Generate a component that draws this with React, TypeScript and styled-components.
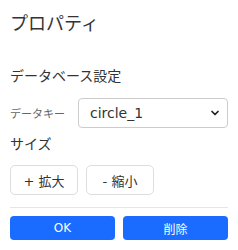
import styled, { createGlobalStyle } from "styled-components";
import { ChevronDown } from "lucide-react";

const GlobalStyle = createGlobalStyle`
  html, body {
    margin: 0;
    padding: 0;
    background: #fff;
  }
  body {
    font-family: "DejaVu Sans", "Noto Sans CJK JP", sans-serif;
    color: #333;
  }
`;

const Panel = styled.div`
  width: 238px;
  box-sizing: border-box;
  padding: 10px 10px 0 10px;
  display: flex;
  flex-direction: column;
`;

const Title = styled.h2`
  margin: 0;
  font-size: 18px;
  font-weight: normal;
  line-height: 27px;
  color: #333;
`;

const SectionTitle = styled.h3<{ $top: number }>`
  margin: ${({ $top }) => $top}px 0 0 0;
  font-size: 14px;
  font-weight: normal;
  line-height: 21px;
  color: #333;
`;

const Row = styled.div`
  display: flex;
  align-items: center;
  gap: 8px;
  margin-top: 11px;
`;

const Label = styled.label`
  font-size: 11px;
  color: #666;
  width: 60px;
  flex-shrink: 0;
`;

const SelectWrap = styled.div`
  position: relative;
  flex: 1;
  height: 30px;
`;

const Select = styled.select`
  appearance: none;
  width: 100%;
  height: 30px;
  box-sizing: border-box;
  border: 1px solid #ccc;
  border-radius: 4px;
  background: #fff;
  padding: 0 28px 0 11px;
  font-family: "DejaVu Sans", sans-serif;
  font-size: 14px;
  color: #333;
`;

const Chevron = styled.span`
  position: absolute;
  right: 7px;
  top: 9px;
  display: flex;
  pointer-events: none;
  color: #222;
`;

const ButtonRow = styled.div`
  display: flex;
  gap: 8px;
  margin-top: 10px;
`;

const SizeButton = styled.button`
  width: 68px;
  height: 30px;
  box-sizing: border-box;
  border: 1px solid #ddd;
  border-radius: 5px;
  background: #fff;
  font-family: "DejaVu Sans", "Noto Sans CJK JP", sans-serif;
  font-size: 13px;
  color: #333;
  padding: 0;
`;

const Divider = styled.hr`
  border: none;
  border-top: 1px solid #e6e6e6;
  margin: 12px 0 0 0;
`;

const Footer = styled.div`
  display: flex;
  gap: 8px;
  margin-top: 8px;
`;

const PrimaryButton = styled.button`
  flex: 1;
  height: 24px;
  border: none;
  border-radius: 4px;
  background: #1a6bff;
  color: #fff;
  font-family: "DejaVu Sans", "Noto Sans CJK JP", sans-serif;
  font-size: 12px;
  padding: 0;
`;

export default function App() {
  return (
    <>
      <GlobalStyle />
      <Panel>
        <Title>プロパティ</Title>
        <SectionTitle $top={29}>データベース設定</SectionTitle>
        <Row>
          <Label>データキー</Label>
          <SelectWrap>
            <Select defaultValue="circle_1">
              <option value="circle_1">circle_1</option>
            </Select>
            <Chevron>
              <ChevronDown size={12} strokeWidth={3.5} />
            </Chevron>
          </SelectWrap>
        </Row>
        <SectionTitle $top={6}>サイズ</SectionTitle>
        <ButtonRow>
          <SizeButton>+ 拡大</SizeButton>
          <SizeButton>- 縮小</SizeButton>
        </ButtonRow>
        <Divider />
        <Footer>
          <PrimaryButton>OK</PrimaryButton>
          <PrimaryButton>削除</PrimaryButton>
        </Footer>
      </Panel>
    </>
  );
}
